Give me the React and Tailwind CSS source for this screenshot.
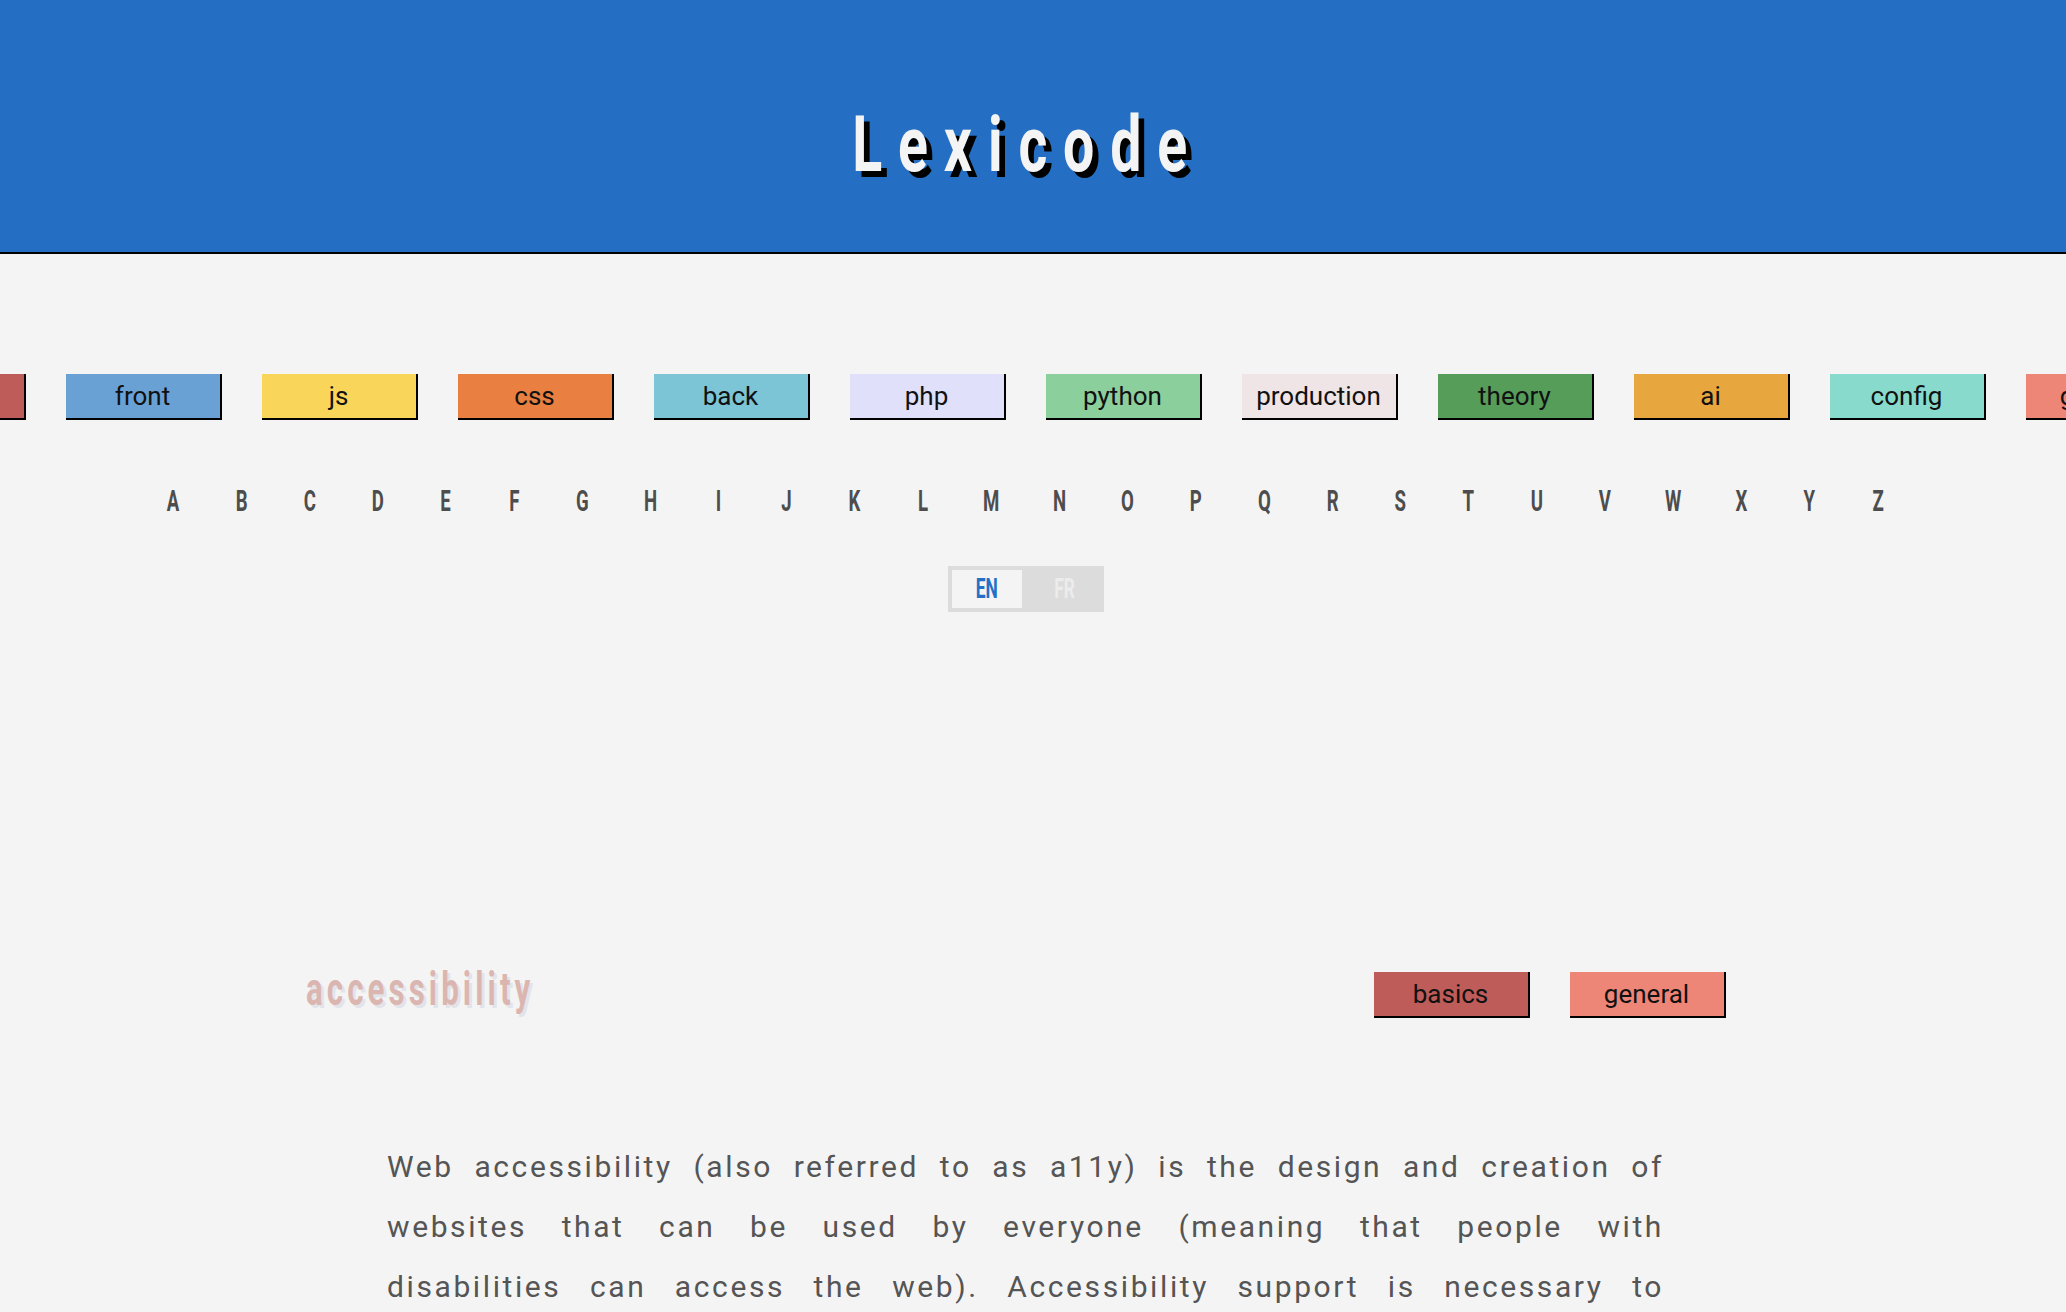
import React from "react";

const topTags = [
  { label: "basics", cls: "bg-[#bd5c59]" },
  { label: "front", cls: "bg-[#6aa1d5]" },
  { label: "js", cls: "bg-[#f9d65a]" },
  { label: "css", cls: "bg-[#e97f40]" },
  { label: "back", cls: "bg-[#7bc5d7]" },
  { label: "php", cls: "bg-[#e0e0fb]" },
  { label: "python", cls: "bg-[#8bcf9c]" },
  { label: "production", cls: "bg-[#efe4e6]" },
  { label: "theory", cls: "bg-[#559d59]" },
  { label: "ai", cls: "bg-[#e7a63e]" },
  { label: "config", cls: "bg-[#88dbcc]" },
  { label: "general", cls: "bg-[#ee8677]" },
];

const letters = "ABCDEFGHIJKLMNOPQRSTUVWXYZ".split("");

function Tag({ label, cls }) {
  return (
    <a
      href="#"
      className={`${cls} mx-[20px] flex h-[46px] w-[156px] shrink-0 items-center justify-center border-r-2 border-b-2 border-black text-[26px] leading-none text-[#111] [font-family:Roboto,sans-serif]`}
    >
      {label}
    </a>
  );
}

export default function App() {
  return (
    <div className="min-h-screen bg-[#f4f4f4] [font-family:Roboto,sans-serif]">
      <header className="h-[254px] border-b-2 border-black bg-[#246fc3] pt-[107px]">
        <h1 className="flex justify-center pr-[10px]">
          <span className="inline-block origin-center scale-x-[0.72] text-[77px] font-bold leading-none tracking-[22px] text-[#f4f4f4] [text-shadow:8px_6px_0_#000]">
            Lexicode
          </span>
        </h1>
      </header>

      <nav className="mt-[120px] flex justify-center overflow-hidden pr-[15px]">
        {topTags.map((t) => (
          <Tag key={t.label} {...t} />
        ))}
      </nav>

      <div className="pr-[15px]">
        <div className="mt-[66px] flex justify-center">
          {letters.map((l) => (
            <a
              key={l}
              href="#"
              className="flex w-[68.2px] shrink-0 justify-center text-[30px] font-bold leading-none text-[#4d4d4d]"
            >
              <span className="inline-block origin-center scale-x-[0.62]">{l}</span>
            </a>
          ))}
        </div>

        <div className="mt-[50px] flex justify-center">
          <div className="flex h-[46px] gap-[8px] bg-[#dcdcdc] p-[4px]">
            <button className="flex h-[38px] w-[70px] items-center justify-center bg-[#f4f4f4] text-[28px] font-bold leading-none text-[#2470c6]">
              <span className="inline-block scale-x-[0.62]">EN</span>
            </button>
            <button className="flex h-[38px] w-[70px] items-center justify-center text-[28px] font-bold leading-none text-[#ececec]">
              <span className="inline-block scale-x-[0.62]">FR</span>
            </button>
          </div>
        </div>

        <section className="mx-auto mt-[360px] flex h-[46px] w-[1440px] items-center justify-between">
          <h2 className="-mt-[6px] mb-[6px] text-[46px] font-bold leading-none text-[#dbb6b0]">
            <span className="inline-block origin-left scale-x-[0.68] tracking-[6px] [text-shadow:4px_3px_0_#e3e3ea]">
              accessibility
            </span>
          </h2>
          <div className="flex">
            <Tag label="basics" cls="bg-[#bd5c59]" />
            <Tag label="general" cls="bg-[#ee8677]" />
          </div>
        </section>

        <div className="mx-auto mt-[119px] w-[1277px] text-justify text-[30px] leading-[60px] tracking-[2.6px] text-[#555555]">
          <span className="block [text-align-last:justify]">
            Web accessibility (also referred to as a11y) is the design and creation of
          </span>
          <span className="block [text-align-last:justify]">
            websites that can be used by everyone (meaning that people with
          </span>
          <span className="block [text-align-last:justify]">
            disabilities can access the web). Accessibility support is necessary to
          </span>
          <span className="block pb-[80px]">
            allow developers to build and maintain good quality websites and content, and to make sure that
            everybody can use the web.
          </span>
        </div>
      </div>
    </div>
  );
}
